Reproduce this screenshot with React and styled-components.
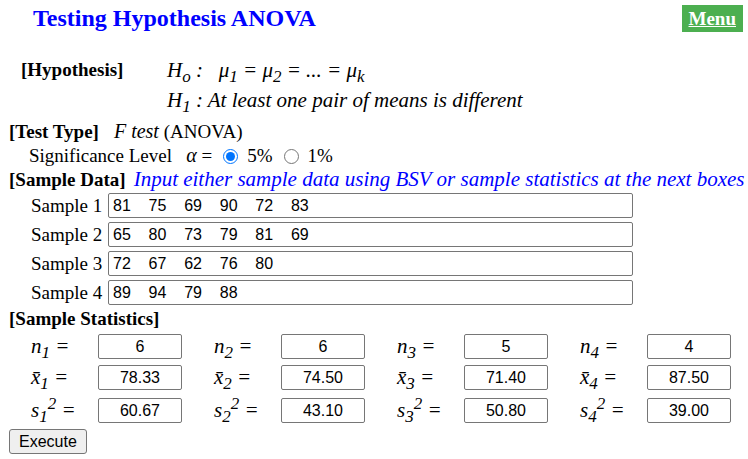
import React, { useState } from "react";
import styled, { createGlobalStyle } from "styled-components";

const GlobalStyle = createGlobalStyle`
  body {
    margin: 0;
    background: #fff;
    color: #000;
    font-family: "Liberation Serif", "Times New Roman", serif;
    font-size: 19px;
    line-height: 24px;
  }
  sub, sup { font-size: 17px; line-height: 0; }
`;

const Page = styled.form`
  padding: 4px 5px 5px 9px;
`;

const Header = styled.header`
  display: flex;
  justify-content: space-between;
  align-items: flex-start;
  padding-left: 24px;
`;

const Title = styled.h1`
  margin: 0;
  color: #00f;
  font-size: 24px;
  line-height: 28px;
`;

const MenuLink = styled.a`
  margin-top: 1px;
  padding: 2px 7px 1px;
  background: #4caf50;
  color: #fff;
  font-weight: bold;
  font-size: 19px;
`;

const Hypothesis = styled.section`
  display: grid;
  grid-template-columns: 146px 1fr;
  padding: 23px 0 5px 12px;
  line-height: 30px;
`;

const Heading = styled.h2`
  margin: 0;
  font-size: 19px;
  line-height: inherit;
  white-space: nowrap;
`;

const Formula = styled.div`
  font-size: 21px;
  font-style: italic;
  white-space: pre;
`;

const Line = styled.div`
  display: flex;
  align-items: baseline;
  gap: ${(p) => p.$gap || 0}px;
  padding-left: ${(p) => p.$indent || 0}px;
  white-space: pre;
`;

const Emphasis = styled.em`
  font-size: 20px;
  line-height: 20px;
`;

const Note = styled.em`
  color: #00f;
  font-size: 21px;
  line-height: 21px;
`;

const Level = styled.label`
  display: flex;
  align-items: baseline;
  gap: 9px;
`;

const Radio = styled.input`
  align-self: center;
  width: 15px;
  height: 15px;
  margin: 0;
  accent-color: #0075ff;
`;

const Samples = styled.div`
  display: grid;
  gap: 4px;
  padding: 1px 110px 2px 22px;
`;

const SampleRow = styled.label`
  display: grid;
  grid-template-columns: 77px 1fr;
  align-items: center;
`;

const TextBox = styled.input`
  box-sizing: border-box;
  width: 100%;
  min-width: 0;
  height: 25px;
  margin: 0;
  padding: 1px 4px;
  border: 1px solid #767676;
  border-radius: 2px;
  background: #fff;
  color: #000;
  font: 16px "Liberation Sans", Arial, sans-serif;
  text-align: ${(p) => (p.$centered ? "center" : "left")};
`;

const Statistics = styled.div`
  display: grid;
  grid-template-columns: repeat(4, 1fr);
  column-gap: 32px;
  padding: 3px 12px 0 22px;
`;

const Statistic = styled.label`
  display: grid;
  grid-template-columns: 67px 1fr;
  align-items: center;
  padding-bottom: ${(p) => p.$space}px;
`;

const Symbol = styled.span`
  font-size: 21px;
  font-style: italic;
  line-height: 25px;
  white-space: nowrap;
`;

const Execute = styled.button`
  display: block;
  height: 25px;
  padding: 0 9px;
  border: 1px solid #767676;
  border-radius: 3px;
  background: #efefef;
  color: #000;
  font: 16px "Liberation Sans", Arial, sans-serif;
`;

const samples = [
  [81, 75, 69, 90, 72, 83],
  [65, 80, 73, 79, 81, 69],
  [72, 67, 62, 76, 80],
  [89, 94, 79, 88],
];

const statistics = [
  { symbol: "n", space: 6, values: ["6", "6", "5", "4"] },
  { symbol: "x̄", space: 8, values: ["78.33", "74.50", "71.40", "87.50"] },
  { symbol: "s", squared: true, space: 6, values: ["60.67", "43.10", "50.80", "39.00"] },
];

export default function App() {
  const [level, setLevel] = useState("5%");
  return (
    <>
      <GlobalStyle />
      <Page onSubmit={(e) => e.preventDefault()}>
        <Header>
          <Title>Testing Hypothesis ANOVA</Title>
          <MenuLink href="#menu">Menu</MenuLink>
        </Header>
        <Hypothesis>
          <Heading>[Hypothesis]</Heading>
          <div>
            <Formula>
              H<sub>o</sub>{" :   μ"}<sub>1</sub>{" = μ"}<sub>2</sub>{" = ... = μ"}<sub>k</sub>
            </Formula>
            <Formula>
              H<sub>1</sub>{" : At least one pair of means is different"}
            </Formula>
          </div>
        </Hypothesis>
        <Line $gap={15}>
          <Heading>[Test Type]</Heading>
          <span><Emphasis>F test</Emphasis> (ANOVA)</span>
        </Line>
        <Line $indent={20} $gap={11}>
          <span>{"Significance Level   "}<Emphasis>α</Emphasis> =</span>
          {["5%", "1%"].map((value) => (
            <Level key={value}>
              <Radio
                type="radio"
                name="level"
                value={value}
                checked={level === value}
                onChange={() => setLevel(value)}
              />
              {value}
            </Level>
          ))}
        </Line>
        <Line $gap={8}>
          <Heading>[Sample Data]</Heading>
          <Note>Input either sample data using BSV or sample statistics at the next boxes</Note>
        </Line>
        <Samples>
          {samples.map((values, i) => (
            <SampleRow key={i}>
              <span>Sample {i + 1}</span>
              <TextBox defaultValue={values.join("    ")} />
            </SampleRow>
          ))}
        </Samples>
        <Heading>[Sample Statistics]</Heading>
        <Statistics>
          {statistics.map(({ symbol, squared, space, values }) =>
            values.map((value, i) => (
              <Statistic key={symbol + i} $space={space}>
                <Symbol>
                  {symbol}<sub>{i + 1}</sub>{squared && <sup>2</sup>} =
                </Symbol>
                <TextBox $centered defaultValue={value} />
              </Statistic>
            ))
          )}
        </Statistics>
        <Execute type="submit">Execute</Execute>
      </Page>
    </>
  );
}
